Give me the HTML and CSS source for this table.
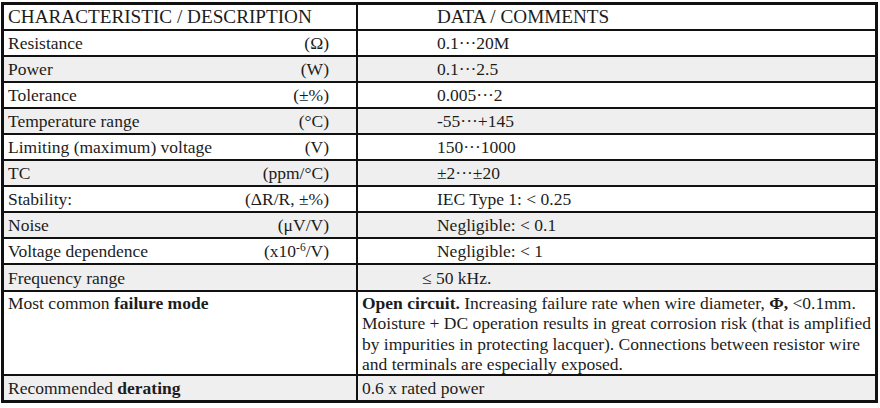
FILE: index.html
```html
<!DOCTYPE html>
<html>
<head>
<meta charset="utf-8">
<link rel="stylesheet" href="styles.css">
</head>
<body>
<table class="spec">
  <tr class="head">
    <th class="c1">CHARACTERISTIC / DESCRIPTION</th>
    <th class="c2"><span class="ind">DATA / COMMENTS</span></th>
  </tr>
  <tr>
    <td class="c1"><div class="lab"><span>Resistance</span><span class="unit">(Ω)</span></div></td>
    <td class="c2"><span class="ind">0.1···20M</span></td>
  </tr>
  <tr class="alt">
    <td class="c1"><div class="lab"><span>Power</span><span class="unit">(W)</span></div></td>
    <td class="c2"><span class="ind">0.1···2.5</span></td>
  </tr>
  <tr>
    <td class="c1"><div class="lab"><span>Tolerance</span><span class="unit">(±%)</span></div></td>
    <td class="c2"><span class="ind">0.005···2</span></td>
  </tr>
  <tr class="alt">
    <td class="c1"><div class="lab"><span>Temperature range</span><span class="unit">(°C)</span></div></td>
    <td class="c2"><span class="ind">-55···+145</span></td>
  </tr>
  <tr>
    <td class="c1"><div class="lab"><span>Limiting (maximum) voltage</span><span class="unit">(V)</span></div></td>
    <td class="c2"><span class="ind">150···1000</span></td>
  </tr>
  <tr class="alt">
    <td class="c1"><div class="lab"><span>TC</span><span class="unit">(ppm/°C)</span></div></td>
    <td class="c2"><span class="ind">±2···±20</span></td>
  </tr>
  <tr>
    <td class="c1"><div class="lab"><span>Stability:</span><span class="unit">(ΔR/R, ±%)</span></div></td>
    <td class="c2"><span class="ind">IEC Type 1: &lt; 0.25</span></td>
  </tr>
  <tr class="alt">
    <td class="c1"><div class="lab"><span>Noise</span><span class="unit">(μV/V)</span></div></td>
    <td class="c2"><span class="ind">Negligible: &lt; 0.1</span></td>
  </tr>
  <tr>
    <td class="c1"><div class="lab"><span>Voltage dependence</span><span class="unit">(x10<sup>-6</sup>/V)</span></div></td>
    <td class="c2"><span class="ind">Negligible: &lt; 1</span></td>
  </tr>
  <tr class="alt big">
    <td class="c1"><div class="lab"><span>Frequency range</span></div></td>
    <td class="c2"><span class="ind2">≤ 50 kHz.</span></td>
  </tr>
  <tr class="tall">
    <td class="c1">Most common <b>failure mode</b></td>
    <td class="c2"><b>Open circuit.</b> Increasing failure rate when wire diameter, <b>Φ,</b> &lt;0.1mm.<br>Moisture + DC operation results in great corrosion risk (that is amplified<br>by impurities in protecting lacquer). Connections between resistor wire<br>and terminals are especially exposed.</td>
  </tr>
  <tr class="alt">
    <td class="c1">Recommended <b>derating</b></td>
    <td class="c2">0.6 x rated power</td>
  </tr>
</table>
</body>
</html>
```
FILE: styles.css
```css
html, body {
  margin: 0;
  padding: 0;
  background: #ffffff;
}
body {
  padding: 2px 0 0 1px;
  font-family: "Liberation Serif", "Times New Roman", serif;
  color: #1c1c1c;
}
.spec {
  border-collapse: collapse;
  width: 877px;
  border: 3px solid #111;
  font-family: "Liberation Serif", "Times New Roman", serif;
  font-size: 17.5px;
}
.spec th,
.spec td {
  border: 2px solid #111;
  padding: 0 4px;
  height: 24px;
  text-align: left;
  font-weight: normal;
  vertical-align: middle;
  line-height: 20px;
  font-family: inherit;
}
.spec .c1 {
  width: 344px;
}
.spec .head th {
  font-size: 19.2px;
  height: 24px;
}
.spec tr.big td {
  height: 25px;
}
.spec tr.alt td {
  background: #efefef;
}
.lab {
  display: flex;
  justify-content: space-between;
  padding-right: 23px;
}
.unit sup {
  font-size: 11.5px;
  line-height: 0;
  vertical-align: 6px;
}
.ind {
  padding-left: 75px;
}
.ind2 {
  padding-left: 60px;
}
.spec tr.tall td {
  vertical-align: top;
  height: 81px;
  padding-top: 1px;
  line-height: 20.25px;
  white-space: nowrap;
}
.spec b {
  font-weight: bold;
}
```
